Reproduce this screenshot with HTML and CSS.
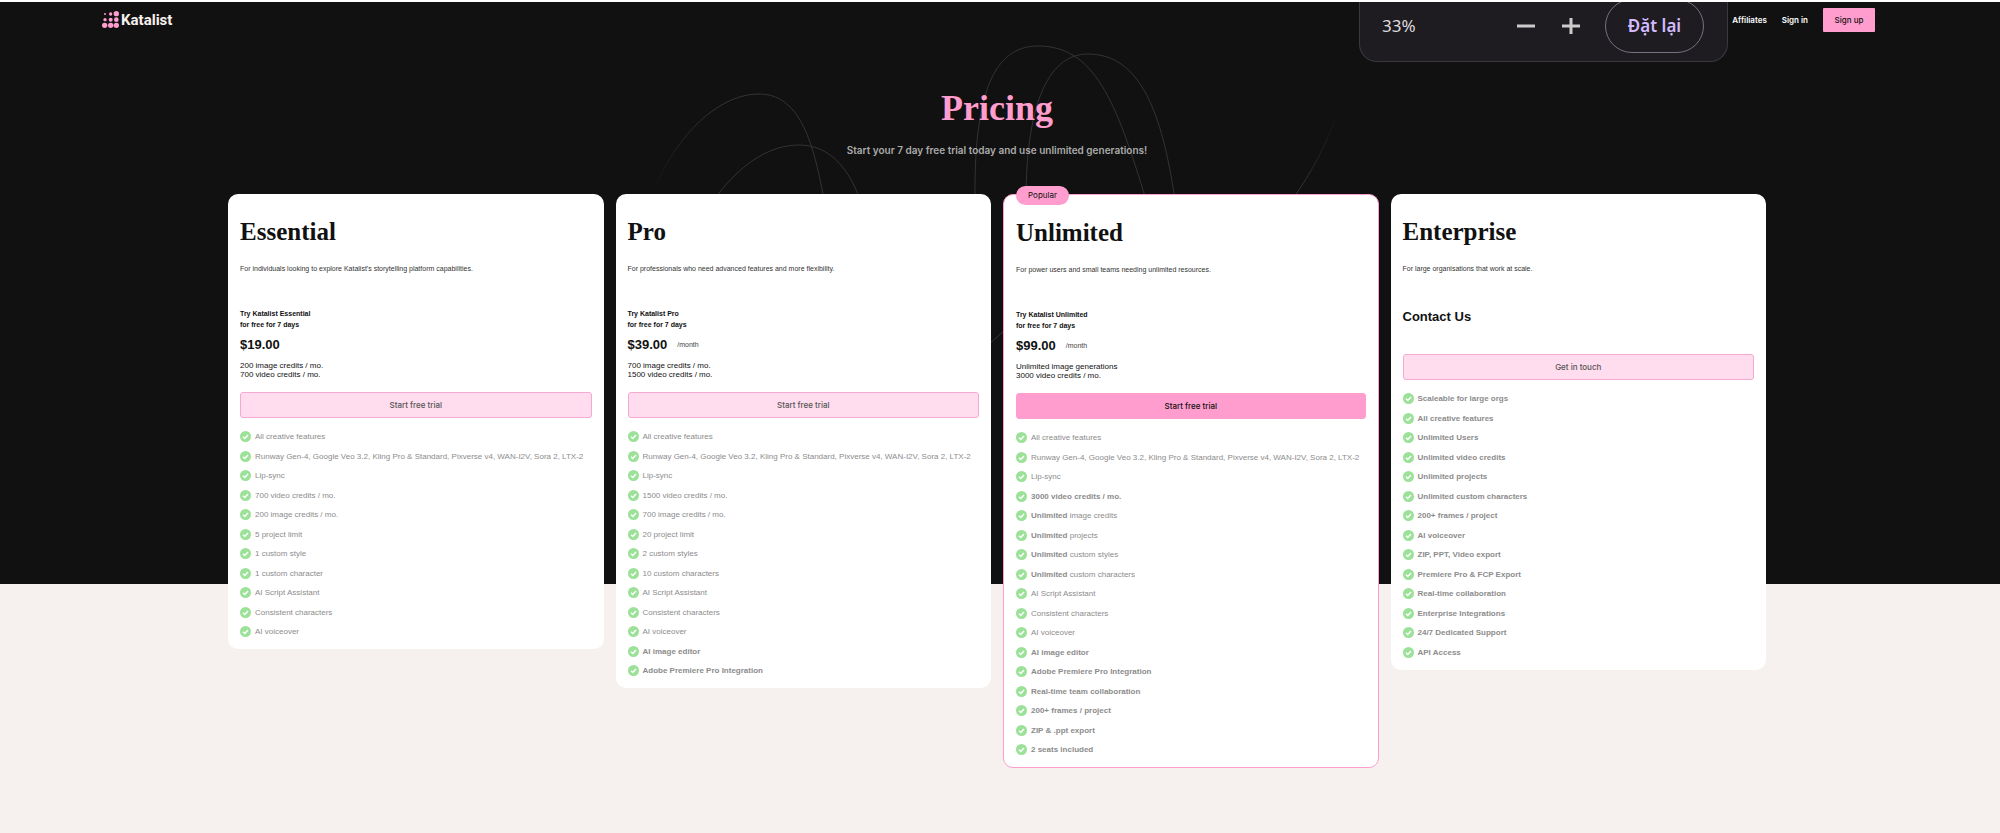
FILE: index.html
```html
<!DOCTYPE html>
<html lang="en">
<head>
    <meta charset="UTF-8">
    <meta name="viewport" content="width=device-width, initial-scale=1.0">
    <title>Katalist - Pricing</title>
    <link rel="stylesheet" href="styles.css">
</head>
<body>

<svg width="0" height="0" class="sprite" aria-hidden="true">
    <symbol id="check" viewBox="0 0 22 22">
        <circle cx="11" cy="11" r="11" fill="#9be198"/>
        <path d="M6 11.5l3.6 3.5L16 8" fill="none" stroke="#fff" stroke-width="3"/>
    </symbol>
</svg>

<!-- dark background with the thin arcs -->
<div class="backdrop">
    <svg class="arcs" width="720" height="360" viewBox="640 0 720 360" fill="none" stroke="#333" aria-hidden="true">
        <defs>
            <linearGradient id="fadeLeft" gradientUnits="userSpaceOnUse" x1="650" y1="190" x2="710" y2="110">
                <stop offset="0" stop-color="#111"/>
                <stop offset="1" stop-color="#333"/>
            </linearGradient>
            <linearGradient id="fadeRight" gradientUnits="userSpaceOnUse" x1="1300" y1="190" x2="1338" y2="112">
                <stop offset="0" stop-color="#333"/>
                <stop offset="1" stop-color="#111"/>
            </linearGradient>
        </defs>
        <path d="M651 198C672 140 716 94 759 94C798 94 813 138 824 200" stroke="url(#fadeLeft)"/>
        <path d="M714 200C738 166 768 145 799 145C828 145 848 166 860 200"/>
        <path d="M975 200C974 100 991 46 1038 46C1094 46 1116 100 1146 200"/>
        <path d="M1026 200C1026 110 1046 54 1088 54C1140 54 1162 112 1175 200"/>
        <path d="M1292 200C1312 172 1328 142 1339 108" stroke="url(#fadeRight)"/>
        <path d="M988 345L1006 329"/>
    </svg>
</div>

<header class="nav">
    <a href="#" class="logo">
        <svg width="17" height="17" viewBox="0 0 51 51" fill="#ff9dce" aria-hidden="true">
            <circle cx="9" cy="9" r="3"/>
            <circle cx="26" cy="9" r="5"/>
            <circle cx="43" cy="8" r="8"/>
            <circle cx="9" cy="26" r="5"/>
            <circle cx="26" cy="26" r="6"/>
            <circle cx="43" cy="26" r="7"/>
            <circle cx="8" cy="43" r="8"/>
            <circle cx="26" cy="43" r="8"/>
            <circle cx="43" cy="43" r="8"/>
        </svg>
        <span>Katalist</span>
    </a>
    <nav class="links">
        <a href="#">Affiliates</a>
        <a href="#">Sign in</a>
        <button type="button" class="signup">Sign up</button>
    </nav>
</header>

<div class="zoom-popup">
    <span class="zoom-level">33%</span>
    <div class="zoom-steps">
        <button type="button" class="zoom-btn" aria-label="Zoom out">
            <svg width="18" height="18" viewBox="0 0 18 18" stroke="#ccc" stroke-width="3"><path d="M0 9H18"/></svg>
        </button>
        <button type="button" class="zoom-btn" aria-label="Zoom in">
            <svg width="18" height="18" viewBox="0 0 18 18" stroke="#ccc" stroke-width="3"><path d="M0 9H18M9 1V17"/></svg>
        </button>
    </div>
    <button type="button" class="zoom-reset" lang="vi">Đặt lại</button>
</div>

<main class="pricing">
    <h1>Pricing</h1>
    <p class="subtitle">Start your 7 day free trial today and use unlimited generations!</p>

    <div class="cards">
        <section class="card">
            <h2>Essential</h2>
            <p class="desc">For individuals looking to explore Katalist's storytelling platform capabilities.</p>
            <p class="trial">Try Katalist Essential<br>for free for 7 days</p>
            <p class="price">$19.00</p>
            <p class="credits">200 image credits / mo.<br>700 video credits / mo.</p>
            <button type="button" class="cta">Start free trial</button>
            <ul class="features">
                <li><svg class="check"><use href="#check"/></svg><span>All creative features</span></li>
                <li><svg class="check"><use href="#check"/></svg><span>Runway Gen-4, Google Veo 3.2, Kling Pro &amp; Standard, Pixverse v4, WAN-I2V, Sora 2, LTX-2</span></li>
                <li><svg class="check"><use href="#check"/></svg><span>Lip-sync</span></li>
                <li><svg class="check"><use href="#check"/></svg><span>700 video credits / mo.</span></li>
                <li><svg class="check"><use href="#check"/></svg><span>200 image credits / mo.</span></li>
                <li><svg class="check"><use href="#check"/></svg><span>5 project limit</span></li>
                <li><svg class="check"><use href="#check"/></svg><span>1 custom style</span></li>
                <li><svg class="check"><use href="#check"/></svg><span>1 custom character</span></li>
                <li><svg class="check"><use href="#check"/></svg><span>AI Script Assistant</span></li>
                <li><svg class="check"><use href="#check"/></svg><span>Consistent characters</span></li>
                <li><svg class="check"><use href="#check"/></svg><span>AI voiceover</span></li>
            </ul>
        </section>

        <section class="card">
            <h2>Pro</h2>
            <p class="desc">For professionals who need advanced features and more flexibility.</p>
            <p class="trial">Try Katalist Pro<br>for free for 7 days</p>
            <p class="price">$39.00 <span class="period">/month</span></p>
            <p class="credits">700 image credits / mo.<br>1500 video credits / mo.</p>
            <button type="button" class="cta">Start free trial</button>
            <ul class="features">
                <li><svg class="check"><use href="#check"/></svg><span>All creative features</span></li>
                <li><svg class="check"><use href="#check"/></svg><span>Runway Gen-4, Google Veo 3.2, Kling Pro &amp; Standard, Pixverse v4, WAN-I2V, Sora 2, LTX-2</span></li>
                <li><svg class="check"><use href="#check"/></svg><span>Lip-sync</span></li>
                <li><svg class="check"><use href="#check"/></svg><span>1500 video credits / mo.</span></li>
                <li><svg class="check"><use href="#check"/></svg><span>700 image credits / mo.</span></li>
                <li><svg class="check"><use href="#check"/></svg><span>20 project limit</span></li>
                <li><svg class="check"><use href="#check"/></svg><span>2 custom styles</span></li>
                <li><svg class="check"><use href="#check"/></svg><span>10 custom characters</span></li>
                <li><svg class="check"><use href="#check"/></svg><span>AI Script Assistant</span></li>
                <li><svg class="check"><use href="#check"/></svg><span>Consistent characters</span></li>
                <li><svg class="check"><use href="#check"/></svg><span>AI voiceover</span></li>
                <li><svg class="check"><use href="#check"/></svg><b>AI image editor</b></li>
                <li><svg class="check"><use href="#check"/></svg><b>Adobe Premiere Pro Integration</b></li>
            </ul>
        </section>

        <section class="card popular">
            <span class="badge">Popular</span>
            <h2>Unlimited</h2>
            <p class="desc">For power users and small teams needing unlimited resources.</p>
            <p class="trial">Try Katalist Unlimited<br>for free for 7 days</p>
            <p class="price">$99.00 <span class="period">/month</span></p>
            <p class="credits">Unlimited image generations<br>3000 video credits / mo.</p>
            <button type="button" class="cta">Start free trial</button>
            <ul class="features">
                <li><svg class="check"><use href="#check"/></svg><span>All creative features</span></li>
                <li><svg class="check"><use href="#check"/></svg><span>Runway Gen-4, Google Veo 3.2, Kling Pro &amp; Standard, Pixverse v4, WAN-I2V, Sora 2, LTX-2</span></li>
                <li><svg class="check"><use href="#check"/></svg><span>Lip-sync</span></li>
                <li><svg class="check"><use href="#check"/></svg><b>3000 video credits / mo.</b></li>
                <li><svg class="check"><use href="#check"/></svg><span><b>Unlimited</b> image credits</span></li>
                <li><svg class="check"><use href="#check"/></svg><span><b>Unlimited</b> projects</span></li>
                <li><svg class="check"><use href="#check"/></svg><span><b>Unlimited</b> custom styles</span></li>
                <li><svg class="check"><use href="#check"/></svg><span><b>Unlimited</b> custom characters</span></li>
                <li><svg class="check"><use href="#check"/></svg><span>AI Script Assistant</span></li>
                <li><svg class="check"><use href="#check"/></svg><span>Consistent characters</span></li>
                <li><svg class="check"><use href="#check"/></svg><span>AI voiceover</span></li>
                <li><svg class="check"><use href="#check"/></svg><b>AI image editor</b></li>
                <li><svg class="check"><use href="#check"/></svg><b>Adobe Premiere Pro Integration</b></li>
                <li><svg class="check"><use href="#check"/></svg><b>Real-time team collaboration</b></li>
                <li><svg class="check"><use href="#check"/></svg><b>200+ frames / project</b></li>
                <li><svg class="check"><use href="#check"/></svg><b>ZIP &amp; .ppt export</b></li>
                <li><svg class="check"><use href="#check"/></svg><b>2 seats included</b></li>
            </ul>
        </section>

        <section class="card enterprise">
            <h2>Enterprise</h2>
            <p class="desc">For large organisations that work at scale.</p>
            <p class="price">Contact Us</p>
            <button type="button" class="cta">Get in touch</button>
            <ul class="features">
                <li><svg class="check"><use href="#check"/></svg><b>Scaleable for large orgs</b></li>
                <li><svg class="check"><use href="#check"/></svg><b>All creative features</b></li>
                <li><svg class="check"><use href="#check"/></svg><b>Unlimited Users</b></li>
                <li><svg class="check"><use href="#check"/></svg><b>Unlimited video credits</b></li>
                <li><svg class="check"><use href="#check"/></svg><b>Unlimited projects</b></li>
                <li><svg class="check"><use href="#check"/></svg><b>Unlimited custom characters</b></li>
                <li><svg class="check"><use href="#check"/></svg><b>200+ frames / project</b></li>
                <li><svg class="check"><use href="#check"/></svg><b>AI voiceover</b></li>
                <li><svg class="check"><use href="#check"/></svg><b>ZIP, PPT, Video export</b></li>
                <li><svg class="check"><use href="#check"/></svg><b>Premiere Pro &amp; FCP Export</b></li>
                <li><svg class="check"><use href="#check"/></svg><b>Real-time collaboration</b></li>
                <li><svg class="check"><use href="#check"/></svg><b>Enterprise Integrations</b></li>
                <li><svg class="check"><use href="#check"/></svg><b>24/7 Dedicated Support</b></li>
                <li><svg class="check"><use href="#check"/></svg><b>API Access</b></li>
            </ul>
        </section>
    </div>
</main>

</body>
</html>
```
FILE: styles.css
```css
* {
    box-sizing: border-box;
}
body {
    margin: 0;
    position: relative;
    font-family: Inter, "Liberation Sans", sans-serif;
    font-size: 8px;
    color: #111;
    background: #f6f0ee;
    border-top: 2px solid #fff;
}
h1, h2, p, ul {
    margin: 0;
    padding: 0;
}
button {
    font-family: Inter, "Liberation Sans", sans-serif;
    font-size: inherit;
    cursor: pointer;
}
a {
    color: inherit;
    text-decoration: none;
}
.sprite {
    position: absolute;
}
.backdrop {
    position: absolute;
    top: 0;
    left: 0;
    right: 0;
    height: 582px;
    background: #111;
    overflow: hidden;
    z-index: -1;
}
.arcs {
    position: absolute;
    top: -2px;
    left: 50%;
    margin-left: -360px;
}

/* Header */
.nav {
    display: flex;
    justify-content: space-between;
    align-items: center;
    height: 36px;
    padding: 0 125px 0 102px;
}
.logo {
    display: flex;
    align-items: center;
    gap: 2px;
    color: #f6f0ee;
    font-family: Roboto, sans-serif;
    font-size: 15px;
    font-weight: bold;
}
.logo svg {
    margin-bottom: 2px;
}
.links {
    display: flex;
    align-items: center;
    gap: 15px;
    color: #fff;
    font-weight: 600;
}
.signup {
    width: 52px;
    height: 24px;
    padding: 0 0 1px;
    border: none;
    border-radius: 1px;
    background: #ff9dce;
    color: #111;
    font-weight: 500;
}

/* Browser zoom bubble */
.zoom-popup {
    position: absolute;
    top: 0;
    right: 272px;
    width: 369px;
    height: 60px;
    display: flex;
    align-items: center;
    gap: 25px;
    padding: 0 23px 12px 22px;
    border: 1px solid #3a383f;
    border-top: none;
    border-radius: 0 0 18px 18px;
    background: #1e1b21;
    font-family: "Noto Sans", sans-serif;
    font-size: 17px;
    overflow: hidden;
}
.zoom-level {
    flex: 1;
    color: #ddd;
}
.zoom-steps {
    display: flex;
    gap: 27px;
}
.zoom-btn {
    display: flex;
    padding: 0;
    border: none;
    background: none;
}
.zoom-reset {
    flex: none;
    width: 99px;
    height: 54px;
    padding: 0;
    border: 1px solid #77727f;
    border-radius: 27px;
    background: none;
    color: #d3bcfd;
    font-family: "Noto Sans", sans-serif;
    font-size: 17px;
    font-weight: 600;
}

/* Pricing */
.pricing {
    padding: 46px 6px 64px 0;
    text-align: center;
}
h1 {
    font-family: "Liberation Serif", serif;
    font-size: 36px;
    line-height: 48px;
    color: #ff9dce;
}
.subtitle {
    margin-top: 10px;
    font-size: 10px;
    font-weight: 600;
    line-height: 16px;
    color: #aaa;
}
.cards {
    display: grid;
    grid-template-columns: repeat(4, minmax(0, 1fr));
    align-items: start;
    gap: 12px;
    max-width: 1538px;
    margin: 36px auto 0;
    font-family: "Liberation Sans", Arial, sans-serif;
    text-align: left;
}
.card {
    position: relative;
    padding: 20px 12px 8px;
    border-radius: 10px;
    background: #fff;
}
.popular {
    border: 1px solid #ff9dce;
}
.badge {
    position: absolute;
    top: -9px;
    left: 12px;
    width: 53px;
    border-radius: 10px;
    background: #ff9dce;
    font-family: Inter, "Liberation Sans", sans-serif;
    line-height: 19px;
    text-align: center;
}
h2 {
    font-family: "Liberation Serif", serif;
    font-size: 25px;
    line-height: 36px;
}
.desc {
    margin-top: 12px;
    font-size: 7px;
    line-height: 14px;
    color: #333;
}
.trial {
    margin-top: 32px;
    font-size: 7px;
    font-weight: bold;
    line-height: 11px;
}
.price {
    display: flex;
    align-items: center;
    gap: 10px;
    margin-top: 4px;
    font-size: 13px;
    font-weight: bold;
    line-height: 22px;
}
.period {
    font-size: 7px;
    font-weight: normal;
    color: #444;
}
.credits {
    margin-top: 5px;
    line-height: 9px;
}
.cta {
    display: block;
    width: 100%;
    height: 26px;
    margin-top: 13px;
    border: 1px solid #f7a9d1;
    border-radius: 3px;
    background: #ffdcee;
    color: #555;
    font-weight: 500;
}
.popular .cta {
    border-color: #ff9dce;
    background: #ff9dce;
    color: #111;
}
.enterprise .price {
    margin-top: 30px;
}
.enterprise .cta {
    margin-top: 26px;
}
.features {
    margin-top: 9px;
    list-style: none;
    color: #8c8c8c;
}
.features li {
    display: flex;
    align-items: center;
    gap: 4px;
    height: 19px;
    white-space: nowrap;
}
.features li:nth-child(even) {
    height: 20px;
}
.check {
    flex: none;
    width: 11px;
    height: 11px;
}
```
